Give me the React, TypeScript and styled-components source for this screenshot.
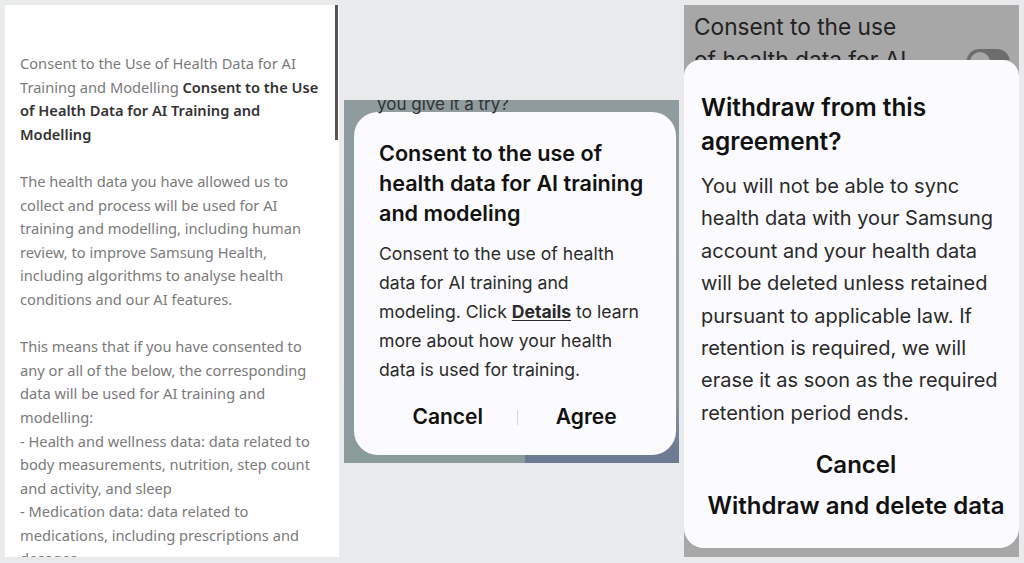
import React from 'react';
import styled, {createGlobalStyle} from "styled-components";

const GlobalStyle = createGlobalStyle`
    html, body {
        margin: 0;
        padding: 0;
        background: #e9eaec;
    }
    * {
        box-sizing: border-box;
    }
`

const Page = styled.div`
    display: flex;
    align-items: flex-start;
    gap: 5px;
    padding: 5px;
    width: 1024px;
    height: 563px;
    overflow: hidden;
`

/* ---------- panel 1: terms text ---------- */

const TermsPanel = styled.div`
    position: relative;
    width: 334px;
    height: 552px;
    background: #ffffff;
    padding: 47px 14px 0 15px;
    overflow: hidden;
    font-family: "Noto Sans", "Open Sans", sans-serif;
    font-size: 14.65px;
    line-height: 23.6px;
    color: #7a7a7a;
`
const ScrollThumb = styled.div`
    position: absolute;
    top: 0;
    right: 1px;
    width: 3px;
    height: 135px;
    background: #555;
`
const Para = styled.p`
    margin: 0 0 23.6px;
`
const Strong = styled.span`
    color: #333;
    font-weight: 600;
`

/* ---------- panel 2: consent dialog ---------- */

const DimPanel = styled.div`
    margin-top: 95px;
    width: 335px;
    height: 363px;
    overflow: hidden;
    background:
        linear-gradient(180deg, #8f9b9c 0%, #8d9a9b 80%, rgba(141, 154, 155, 0) 97%),
        linear-gradient(90deg, #8b9b9a 0 54%, #6c7a93 54% 100%);
    padding: 0 3px 0 10px;
    font-family: "Inter", "Roboto", sans-serif;
`
const BehindText = styled.div`
    margin: -6px 0 0 23px;
    height: 18px;
    font-size: 17px;
    line-height: 20px;
    color: #2e3435;
`
const Dialog = styled.div`
    height: 343px;
    background: #fbfbfd;
    border-radius: 24px;
    padding: 26px 28px 0 25px;
`
const DialogTitle = styled.h2<{size: number, lh: number}>`
    margin: 0;
    font-size: ${p => p.size}px;
    line-height: ${p => p.lh}px;
    font-weight: 600;
    color: #111;
`
const DialogText = styled.p<{size: number, lh: number, gap: number}>`
    margin: ${p => p.gap}px 0 0;
    font-size: ${p => p.size}px;
    line-height: ${p => p.lh}px;
    color: #2a2a2a;
    font-weight: 400;
`
const Link = styled.span`
    font-weight: 700;
    text-decoration: underline;
    text-underline-offset: 2px;
`
const ButtonRow = styled.div`
    display: grid;
    grid-template-columns: 1fr 1px 1fr;
    align-items: center;
    width: 276px;
    margin-top: 18px;
`
const ActionButton = styled.span<{size: number}>`
    font-size: ${p => p.size}px;
    font-weight: 600;
    color: #111;
    line-height: 30px;
    text-align: center;
`
const Divider = styled.span`
    height: 15px;
    background: #d6d6d8;
`

/* ---------- panel 3: withdraw sheet ---------- */

const SheetPanel = styled.div`
    width: 335px;
    height: 552px;
    background: #a7a7a7;
    display: flex;
    flex-direction: column;
    overflow: hidden;
    font-family: "Inter", "Roboto", sans-serif;
`
const SettingRow = styled.div`
    height: 55px;
    flex-shrink: 0;
    display: flex;
    justify-content: space-between;
    padding: 5px 9px 0 10px;
    overflow: hidden;
`
const SettingLabel = styled.div`
    font-size: 22.7px;
    line-height: 33px;
    color: #222;
`
const Switch = styled.div`
    margin-top: 39px;
    width: 44px;
    height: 26px;
    border-radius: 13px;
    background: #6d6d6d;
    border-left: 1px solid #8a8a8a;
    position: relative;
    &::after {
        content: "";
        position: absolute;
        left: 3px;
        top: 3px;
        width: 20px;
        height: 20px;
        border-radius: 50%;
        background: #a7a7a7;
    }
`
const Sheet = styled.div`
    flex: 0 0 488px;
    background: #fbfbfd;
    border-radius: 16px 16px 20px 20px;
    padding: 30px 14px 0 17px;
`
const SheetButtons = styled.div`
    display: flex;
    flex-direction: column;
    align-items: center;
    margin-top: 21px;
    gap: 11px;
    padding-left: 6px;
    white-space: nowrap;
`

export default function App() {
    return (
        <>
            <GlobalStyle/>
            <Page>
                <TermsPanel>
                    <ScrollThumb/>
                    <Para>
                        Consent to the Use of Health Data for AI Training and Modelling <Strong>Consent to the Use of Health Data for AI Training and Modelling</Strong>
                    </Para>
                    <Para>
                        The health data you have allowed us to collect and process will be used for AI training and modelling, including human review, to improve Samsung Health, including algorithms to analyse health conditions and our AI features.
                    </Para>
                    <Para>
                        This means that if you have consented to any or all of the below, the corresponding data will be used for AI training and modelling:<br/>
                        - Health and wellness data: data related to body measurements, nutrition, step count and activity, and sleep<br/>
                        - Medication data: data related to medications, including prescriptions and dosages
                    </Para>
                </TermsPanel>

                <DimPanel>
                    <BehindText>you give it a try?</BehindText>
                    <Dialog>
                        <DialogTitle size={21.6} lh={30}>
                            Consent to the use of health data for AI training and modeling
                        </DialogTitle>
                        <DialogText size={17.6} lh={29} gap={11}>
                            Consent to the use of health data for AI training and modeling. Click <Link>Details</Link> to learn more about how your health data is used for training.
                        </DialogText>
                        <ButtonRow>
                            <ActionButton size={21}>Cancel</ActionButton>
                            <Divider/>
                            <ActionButton size={21}>Agree</ActionButton>
                        </ButtonRow>
                    </Dialog>
                </DimPanel>

                <SheetPanel>
                    <SettingRow>
                        <SettingLabel>
                            Consent to the use<br/>of health data for AI
                        </SettingLabel>
                        <Switch/>
                    </SettingRow>
                    <Sheet>
                        <DialogTitle size={24.4} lh={34}>
                            Withdraw from this agreement?
                        </DialogTitle>
                        <DialogText size={20} lh={32.4} gap={12}>
                            You will not be able to sync health data with your Samsung account and your health data will be deleted unless retained pursuant to applicable law. If retention is required, we will erase it as soon as the required retention period ends.
                        </DialogText>
                        <SheetButtons>
                            <ActionButton size={24}>Cancel</ActionButton>
                            <ActionButton size={24}>Withdraw and delete data</ActionButton>
                        </SheetButtons>
                    </Sheet>
                </SheetPanel>
            </Page>
        </>
    );
}
